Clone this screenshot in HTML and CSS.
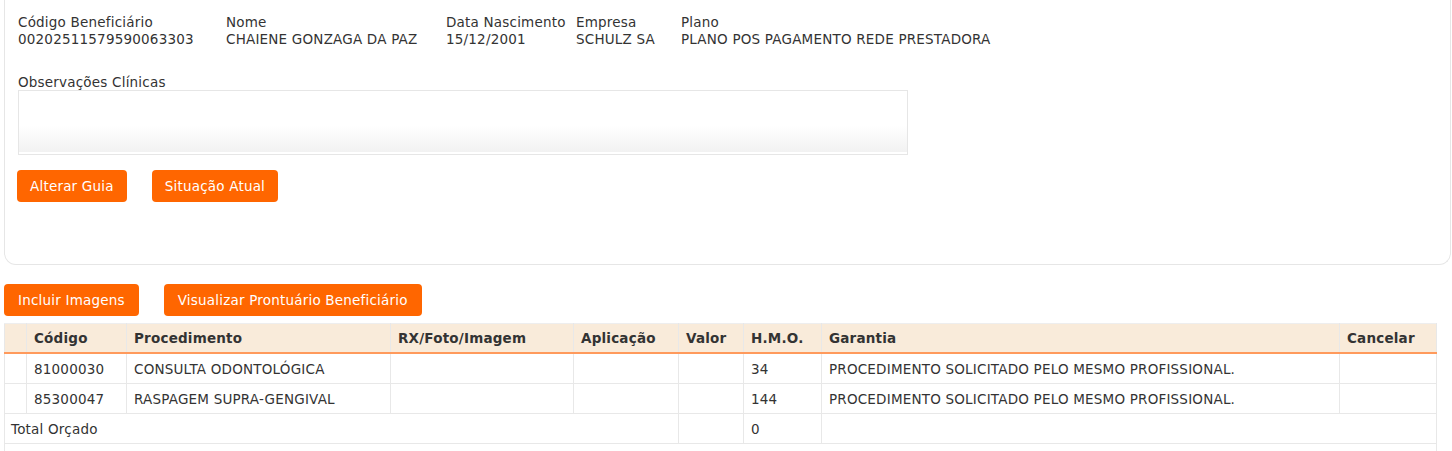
FILE: index.html
```html
<!DOCTYPE html>
<html lang="pt-BR">
<head>
<meta charset="utf-8">
<title>Guia</title>
<link rel="stylesheet" href="styles.css">
</head>
<body>
<div class="card">
  <div class="fields">
    <div class="field w-cod"><div class="lbl">Código Beneficiário</div><div class="val">00202511579590063303</div></div>
    <div class="field w-nome"><div class="lbl">Nome</div><div class="val">CHAIENE GONZAGA DA PAZ</div></div>
    <div class="field w-data"><div class="lbl">Data Nascimento</div><div class="val">15/12/2001</div></div>
    <div class="field w-emp"><div class="lbl">Empresa</div><div class="val">SCHULZ SA</div></div>
    <div class="field"><div class="lbl">Plano</div><div class="val">PLANO POS PAGAMENTO REDE PRESTADORA</div></div>
  </div>
  <div class="obs">
    <div class="obs-lbl">Observações Clínicas</div>
    <div class="obs-box"></div>
  </div>
  <div class="actions">
    <button class="btn">Alterar Guia</button>
    <button class="btn">Situação Atual</button>
  </div>
</div>

<div class="actions2">
  <button class="btn btn-wide">Incluir Imagens</button>
  <button class="btn btn-wide">Visualizar Prontuário Beneficiário</button>
</div>

<table class="grid">
  <colgroup>
    <col class="c0"><col class="c1"><col class="c2"><col class="c3"><col class="c4"><col class="c5"><col class="c6"><col class="c7"><col class="c8">
  </colgroup>
  <thead>
    <tr><th></th><th>Código</th><th>Procedimento</th><th>RX/Foto/Imagem</th><th>Aplicação</th><th>Valor</th><th>H.M.O.</th><th>Garantia</th><th>Cancelar</th></tr>
  </thead>
  <tbody>
    <tr><td></td><td>81000030</td><td>CONSULTA ODONTOLÓGICA</td><td></td><td></td><td></td><td>34</td><td>PROCEDIMENTO SOLICITADO PELO MESMO PROFISSIONAL.</td><td></td></tr>
    <tr><td></td><td>85300047</td><td>RASPAGEM SUPRA-GENGIVAL</td><td></td><td></td><td></td><td>144</td><td>PROCEDIMENTO SOLICITADO PELO MESMO PROFISSIONAL.</td><td></td></tr>
    <tr class="total"><td colspan="5" class="total-lbl">Total Orçado</td><td></td><td>0</td><td colspan="2"></td></tr>
    <tr class="spacer"><td colspan="9"></td></tr>
  </tbody>
</table>
</body>
</html>
```
FILE: styles.css
```css
html,body{margin:0;padding:0;background:#fff}
body{font-family:"DejaVu Sans",Verdana,sans-serif;font-size:13.5px;letter-spacing:0.2px;color:#333;padding:0 0 0 4px}

.card{
  width:1447px;
  box-sizing:border-box;
  border:1px solid #e6e6e6;
  border-top:none;
  border-radius:0 0 12px 12px;
  padding:14px 13px 0 13px;
  height:265px;
}
.fields{display:flex}
.field{line-height:17px}
.w-cod{width:208px}
.w-nome{width:220px}
.w-data{width:130px}
.w-emp{width:105px}
.lbl,.val{white-space:nowrap}

.obs{margin-top:26px}
.obs-lbl{line-height:16px;height:16px}
.obs-box{
  width:888px;height:63px;
  border:1px solid #e6e6e6;
  background:linear-gradient(to bottom,#fff 0,#fff 55%,#f1f1f1 100%);
  box-shadow:inset 0 -2px 0 #fff;
}

.actions{display:flex;gap:25px;margin-top:15px;margin-left:-1px}
.btn{
  font-family:"DejaVu Sans",Verdana,sans-serif;font-size:13.5px;letter-spacing:0.2px;color:#fff;
  background:#ff6600;border:none;border-radius:4px;
  height:32px;padding:0 13px;cursor:pointer;line-height:32px;
}
.btn-wide{padding:0 14px}

.actions2{display:flex;gap:25px;margin-top:19px}

.grid{
  margin-top:7px;
  border-collapse:collapse;
  table-layout:fixed;
  width:1432px;
}
.c0{width:22px}.c1{width:100px}.c2{width:264px}.c3{width:183px}.c4{width:105px}
.c5{width:65px}.c6{width:78px}.c7{width:518px}.c8{width:97px}
.grid th,.grid td{
  border:1px solid #e8e8e8;
  height:29px;padding:0 7px;
  text-align:left;white-space:nowrap;overflow:hidden;
}
.grid th{
  height:28px;
  background:#f9ebda;font-weight:bold;color:#333;
  border-bottom:2px solid #ff9a5c;
  border-top-color:#eee;
}
.grid td{color:#333}
.grid .total-lbl{padding-left:6px}
.grid .spacer td{height:20px}
```
